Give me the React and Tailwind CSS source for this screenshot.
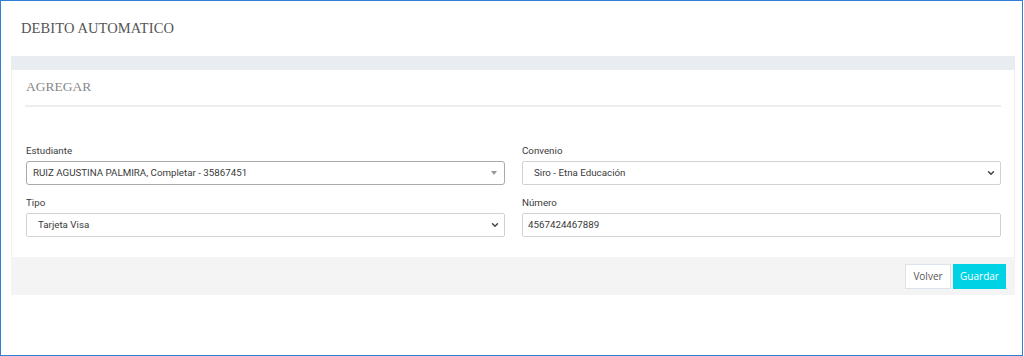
import { ChevronDown } from 'lucide-react';

const Field = ({ label, children }) => (
  <div className="flex flex-col">
    <label className="text-[9.75px] leading-[14px] text-[#3a3a3a] mb-[3px]">{label}</label>
    {children}
  </div>
);

const SelectBox = ({ value, pad = 'pl-[11px]' }) => (
  <div className={`h-[24px] flex items-center justify-between border border-[#d2d2d2] rounded-[2px] ${pad} pr-[4px] bg-white`}>
    <span className="text-[9.75px] text-[#3a3a3a]">{value}</span>
    <ChevronDown size={10} strokeWidth={3.5} className="text-[#444]" />
  </div>
);

const App = () => {
  return (
    <div className="w-[1023px] h-[356px] border border-[#2f80d6] bg-white font-['Roboto',sans-serif]">
      {/* Page title */}
      <div className="h-[55px] flex items-center pl-[20px]">
        <h1 className="font-['Liberation_Serif',serif] text-[14.5px] text-[#555] tracking-[0.1px]">DEBITO AUTOMATICO</h1>
      </div>

      <div className="ml-[10px] w-[1004px]">
        <div className="h-[14px] bg-[#e9edf1]" />

        {/* Card */}
        <div className="bg-white border-l border-r border-[#f0f0f0] px-[13px] pb-[20px]">
          <div className="h-[37px] flex items-center border-b-2 border-[#eeeeee] pl-[1px]">
            <h2 className="font-['Liberation_Serif',serif] text-[13.5px] text-[#888]">AGREGAR</h2>
          </div>

          <div className="grid grid-cols-2 gap-x-[17px] gap-y-[11px] pt-[37px] pl-[1px]">
            <Field label="Estudiante">
              <div className="h-[24px] flex items-center justify-between border border-[#aaaaaa] rounded-[3px] pl-[6px] pr-[7px] bg-white">
                <span className="text-[9.75px] text-[#3a3a3a]">RUIZ AGUSTINA PALMIRA, Completar - 35867451</span>
                <span className="w-0 h-0 border-l-[3px] border-r-[3px] border-t-[4px] border-l-transparent border-r-transparent border-t-[#999]" />
              </div>
            </Field>
            <Field label="Convenio">
              <SelectBox value="Siro - Etna Educación" />
            </Field>
            <Field label="Tipo">
              <SelectBox value="Tarjeta Visa" />
            </Field>
            <Field label="Número">
              <div className="h-[24px] flex items-center border border-[#d2d2d2] rounded-[2px] pl-[5px] bg-white">
                <span className="text-[9.75px] text-[#3a3a3a]">4567424467889</span>
              </div>
            </Field>
          </div>
        </div>

        {/* Footer */}
        <div className="h-[38px] bg-[#f4f4f4] flex items-center justify-end gap-[2px] pr-[9px]">
          <button className="h-[25px] w-[46px] border border-[#dde3ea] bg-white text-[10px] text-[#555] font-['Open_Sans',sans-serif]">
            Volver
          </button>
          <button className="h-[25px] w-[53px] bg-[#00d2e6] text-[10px] text-white font-['Open_Sans',sans-serif]">
            Guardar
          </button>
        </div>
      </div>
    </div>
  );
};

export default App;
